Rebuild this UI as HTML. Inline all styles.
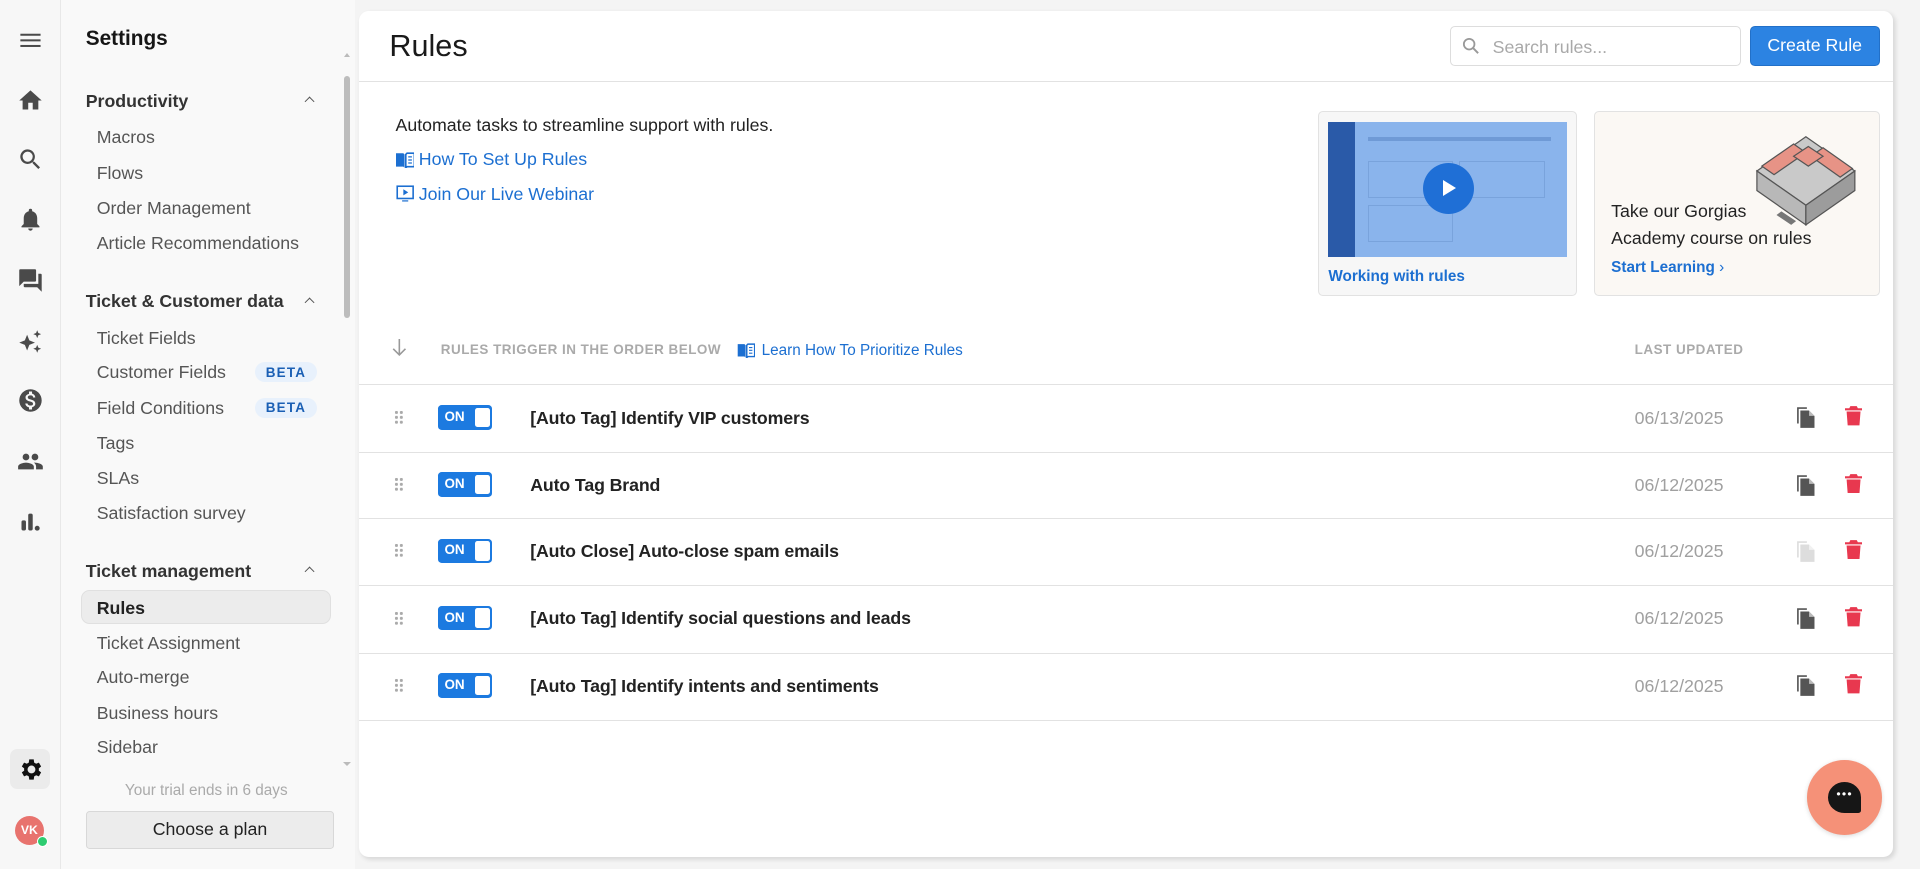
<!DOCTYPE html>
<html><head><meta charset="utf-8"><style>
html{zoom:1.22449}
*{box-sizing:border-box;margin:0;padding:0}
body{width:1568px;height:710px;overflow:hidden;background:#f4f4f4;font-family:"Liberation Sans",sans-serif;color:#161616;position:relative}
.rail{position:absolute;left:0;top:0;width:50px;height:710px;background:#f7f7f7;border-right:1px solid #e8e8e8}
.rail svg{position:absolute;left:14px;width:22px;height:22px;fill:#4a4a4a}
.side{position:absolute;left:50px;top:0;width:240px;height:710px;background:#f9f9f9}
.side h1{position:absolute;left:20px;top:22px;font-size:17px;font-weight:bold}
.sec{position:absolute;left:20px;font-size:14.5px;font-weight:bold;color:#333;width:190px}
.sec:after{content:"";position:absolute;right:4px;top:6px;width:5px;height:5px;border-left:1.3px solid #555;border-top:1.3px solid #555;transform:rotate(45deg)}
.it{position:absolute;left:29px;font-size:14.5px;color:#555}
.beta{position:absolute;left:158px;font-size:11px;font-weight:bold;color:#1a5fb4;background:#e8f1fc;border-radius:9px;padding:2px 9px;letter-spacing:1px}
.main{position:absolute;left:293px;top:9px;width:1253px;height:691px;background:#fff;border-radius:8px;box-shadow:2px 2px 4px rgba(0,0,0,.12)}
.a{position:absolute}
.row{position:absolute;left:0;width:1253px;height:55px;border-top:1px solid #e2e2e2}
.row .drag{position:absolute;left:29px;top:20px;width:8px;height:12px;background:radial-gradient(circle,#aaa 1.2px,transparent 1.4px) 0 0/4px 4px}
.tog{position:absolute;left:65px;top:16px;width:44px;height:20px;background:#1c7ae0;border-radius:3px;color:#fff;font-size:11px;font-weight:bold;padding:3px 0 0 5px}
.tog:after{content:"";position:absolute;right:2px;top:2px;width:12px;height:16px;background:#fff;border-radius:2px}
.row .t{position:absolute;left:140px;top:18px;font-size:14.5px;font-weight:600;color:#222;letter-spacing:-.1px}
.row .d{position:absolute;left:1042px;top:18px;font-size:14.5px;color:#a0a0a0}
.row .cp{position:absolute;left:1174px;top:17px;width:16px;height:18px}
.row .tr{position:absolute;left:1214px;top:17px;width:14px;height:16px}
</style></head><body>
<div class="rail">
<svg style="top:22px" viewBox="0 0 24 24"><rect x="3" y="6" width="18" height="1.8"/><rect x="3" y="11" width="18" height="1.8"/><rect x="3" y="16" width="18" height="1.8"/></svg>
<svg style="top:71px" viewBox="0 0 24 24"><path d="M10 20v-6h4v6h5v-8h3L12 3 2 12h3v8z"/></svg>
<svg style="top:119px" viewBox="0 0 24 24"><path d="M15.5 14h-.8l-.3-.3A6.5 6.5 0 1 0 9.5 16a6.5 6.5 0 0 0 4.2-1.6l.3.3v.8l5 5 1.5-1.5-5-5zm-6 0a4.5 4.5 0 1 1 0-9 4.5 4.5 0 0 1 0 9z"/></svg>
<svg style="top:168px" viewBox="0 0 24 24"><path d="M12 22a2 2 0 0 0 2-2h-4a2 2 0 0 0 2 2zm6-6v-5c0-3.1-1.6-5.6-4.5-6.3V4a1.5 1.5 0 0 0-3 0v.7C7.6 5.4 6 7.9 6 11v5l-2 2v1h16v-1z"/></svg>
<svg style="top:218px" viewBox="0 0 24 24"><path d="M21 6h-2v9H6v2c0 .6.4 1 1 1h11l4 4V7c0-.6-.4-1-1-1zm-4 6V3c0-.6-.4-1-1-1H3c-.6 0-1 .4-1 1v14l4-4h10c.6 0 1-.4 1-1z"/></svg>
<svg style="top:268px" viewBox="0 0 24 24"><path d="M9 6l2 5 5 2-5 2-2 5-2-5-5-2 5-2zM18 2l1 2.5L21.5 5.5 19 6.5 18 9l-1-2.5L14.5 5.5 17 4.5zM18 15l1 2.5 2.5 1-2.5 1L18 22l-1-2.5-2.5-1 2.5-1z"/></svg>
<svg style="top:316px" viewBox="0 0 24 24"><path d="M12 2a10 10 0 1 0 0 20 10 10 0 0 0 0-20zm1.4 16.1V20h-2.7v-1.9c-1.7-.4-3.2-1.5-3.3-3.4h2c.1 1 .8 1.8 2.6 1.8 1.9 0 2.3-.9 2.3-1.5 0-.8-.4-1.6-2.600-2.1-2.4-.6-4.1-1.6-4.1-3.6 0-1.7 1.4-2.8 3.1-3.2V4h2.7v1.9c1.9.5 2.8 1.9 2.9 3.4h-2c0-1.1-.6-1.8-2.3-1.8-1.5 0-2.4.7-2.4 1.7 0 .9.7 1.4 2.6 1.9s4.1 1.300 4.1 3.7c0 1.8-1.3 2.7-2.9 3.3z"/></svg>
<svg style="top:366px" viewBox="0 0 24 24"><path d="M16 11a3 3 0 1 0 0-6 3 3 0 0 0 0 6zm-8 0a3 3 0 1 0 0-6 3 3 0 0 0 0 6zm0 2c-2.3 0-7 1.2-7 3.5V19h14v-2.5C15 14.2 10.3 13 8 13zm8 0h-1c1.2.8 2 2 2 3.5V19h6v-2.5c0-2.3-4.7-3.5-7-3.5z"/></svg>
<svg style="top:415px" viewBox="0 0 24 24"><rect x="4" y="11" width="4" height="9" rx="1.5"/><rect x="10" y="5" width="4" height="15" rx="1.5"/><circle cx="18" cy="18" r="2.2"/></svg>
<div style="position:absolute;left:8px;top:612px;width:33px;height:32px;background:#ebebeb;border-radius:6px"></div>
<svg style="top:617px;fill:#111" viewBox="0 0 24 24"><path d="M19.4 13a7.5 7.5 0 0 0 0-2l2.1-1.6-2-3.5-2.5 1a7.3 7.3 0 0 0-1.7-1L14.9 3h-4l-.4 2.9a7.3 7.3 0 0 0-1.7 1l-2.5-1-2 3.5L6.4 11a7.5 7.5 0 0 0 0 2l-2.1 1.6 2 3.5 2.5-1c.5.4 1.1.7 1.7 1l.4 2.9h4l.4-2.9c.6-.3 1.2-.6 1.7-1l2.5 1 2-3.5zM12.9 15.5a3.5 3.5 0 1 1 0-7 3.5 3.5 0 0 1 0 7z"/></svg>
<div style="position:absolute;left:12px;top:666px;width:24px;height:24px;border-radius:50%;background:#e8736e;color:#fff;font-size:10px;font-weight:bold;text-align:center;line-height:24px">VK</div>
<div style="position:absolute;left:30px;top:683px;width:9px;height:9px;border-radius:50%;background:#2ecc71;border:1.5px solid #fff"></div>
</div>
<div class="side">
<h1>Settings</h1>
<div style="position:absolute;left:231px;top:62px;width:5px;height:198px;background:#bdbdbd;border-radius:3px"></div>
<div style="position:absolute;left:231px;top:41px;width:0;height:0;border:3px solid transparent;border-bottom:4px solid #bbb"></div>
<div style="position:absolute;left:230px;top:622px;width:0;height:0;border:3.5px solid transparent;border-top:4px solid #bbb"></div>
<div class="sec" style="top:74px">Productivity</div>
<div class="it" style="top:104px">Macros</div>
<div class="it" style="top:133px">Flows</div>
<div class="it" style="top:162px">Order Management</div>
<div class="it" style="top:190px">Article Recommendations</div>
<div class="sec" style="top:238px">Ticket &amp; Customer data</div>
<div class="it" style="top:268px">Ticket Fields</div>
<div class="it" style="top:296px">Customer Fields</div><div class="beta" style="top:296px">BETA</div>
<div class="it" style="top:325px">Field Conditions</div><div class="beta" style="top:325px">BETA</div>
<div class="it" style="top:354px">Tags</div>
<div class="it" style="top:382px">SLAs</div>
<div class="it" style="top:411px">Satisfaction survey</div>
<div class="sec" style="top:458px">Ticket management</div>
<div style="position:absolute;left:16px;top:482px;width:204px;height:28px;background:#ececec;border:1px solid #e0e0e0;border-radius:7px"></div>
<div class="it" style="top:488px;font-weight:bold;color:#222">Rules</div>
<div class="it" style="top:517px">Ticket Assignment</div>
<div class="it" style="top:545px">Auto-merge</div>
<div class="it" style="top:574px">Business hours</div>
<div class="it" style="top:602px">Sidebar</div>
<div style="position:absolute;left:52px;top:639px;font-size:12.5px;color:#aaa">Your trial ends in 6 days</div>
<div style="position:absolute;left:20px;top:662px;width:203px;height:31px;background:#ececec;border:1px solid #d8d8d8;border-radius:3px;text-align:center;line-height:29px;font-size:14.5px;color:#222">Choose a plan</div>
</div>
<div class="main">
<div class="a" style="left:25px;top:15px;font-size:25px;color:#1a1a1a">Rules</div>
<div class="a" style="left:891px;top:12px;width:238px;height:33px;border:1px solid #ddd;border-radius:4px"></div>
<svg class="a" style="left:900px;top:20px" width="16" height="16" viewBox="0 0 24 24"><circle cx="10" cy="10" r="6.5" fill="none" stroke="#999" stroke-width="2.2"/><path d="M15 15l6 6" stroke="#999" stroke-width="2.4"/></svg>
<div class="a" style="left:926px;top:21px;font-size:14.5px;color:#a9a9a9">Search rules...</div>
<div class="a" style="left:1136px;top:12px;width:106px;height:33px;background:#2c83e2;border-radius:4px;color:#fff;font-size:14.5px;text-align:center;line-height:31px;border:1px solid #2270c8">Create Rule</div>
<div class="a" style="left:0;top:57px;width:1253px;border-top:1px solid #e2e2e2"></div>
<div class="a" style="left:30px;top:85px;font-size:14.5px;color:#222">Automate tasks to streamline support with rules.</div>
<svg class="a" style="left:30px;top:115px" width="15" height="13" viewBox="0 0 15 13"><path d="M0 1h6l1 1v11l-1-1H0z" fill="#1c6fd1"/><path d="M8 2l1-1h6v11H9l-1 1z" fill="none" stroke="#1c6fd1" stroke-width="1.3"/><path d="M10 4h3M10 6.5h3M10 9h3" stroke="#1c6fd1"/></svg>
<div class="a" style="left:49px;top:113px;font-size:14.5px;color:#1c6fd1">How To Set Up Rules</div>
<svg class="a" style="left:30px;top:142px" width="15" height="14" viewBox="0 0 15 14"><rect x="1" y="1" width="13" height="10" fill="none" stroke="#1c6fd1" stroke-width="1.3"/><path d="M6 3.5v5l4-2.5z" fill="#1c6fd1"/><path d="M5 13h5" stroke="#1c6fd1"/></svg>
<div class="a" style="left:49px;top:141px;font-size:14.5px;color:#1c6fd1">Join Our Live Webinar</div>
<div class="a" style="left:783px;top:82px;width:212px;height:151px;border:1px solid #e2e2e2;border-radius:4px;background:#f7f7f7;overflow:hidden">
<div class="a" style="left:8px;top:8px;width:195px;height:110px;background:#8ab4ec"></div>
<div class="a" style="left:8px;top:8px;width:22px;height:110px;background:#2a5aa8"></div>
<div class="a" style="left:40px;top:20px;width:150px;height:3px;background:#6f9ad6"></div>
<div class="a" style="left:40px;top:40px;width:70px;height:30px;border:1px solid #79a3dc"></div>
<div class="a" style="left:115px;top:40px;width:70px;height:30px;border:1px solid #79a3dc"></div>
<div class="a" style="left:40px;top:76px;width:70px;height:30px;border:1px solid #79a3dc"></div>
<div class="a" style="left:85px;top:41px;width:42px;height:42px;border-radius:50%;background:#1f6fd6"></div>
<div class="a" style="left:102px;top:55px;width:0;height:0;border-top:7px solid transparent;border-bottom:7px solid transparent;border-left:11px solid #fff"></div>
<div class="a" style="left:8px;top:127px;font-size:12.5px;font-weight:bold;color:#1c6fd1">Working with rules</div>
</div>
<div class="a" style="left:1009px;top:82px;width:233px;height:151px;border:1px solid #e2e2e2;border-radius:4px;background:#fbf8f4;overflow:hidden">
<svg class="a" style="left:128px;top:8px" width="96" height="92" viewBox="0 0 96 92"><path d="M4 40l40-28 40 28-40 28z" fill="#c9c9c9" stroke="#555"/><path d="M4 40v16l40 28V68z" fill="#b8b8b8" stroke="#555"/><path d="M44 68v16l40-28V40z" fill="#9c9c9c" stroke="#555"/><path d="M8 36l26-18 10 7-26 18z M48 28l10-7 24 17-10 7z" fill="#e79386" stroke="#555"/><path d="M34 28l12-8 12 8-12 8z" fill="#e79386" stroke="#555"/><path d="M20 76l12 8 4-3-12-8z" fill="#777"/></svg>
<div class="a" style="left:13px;top:70px;font-size:14.5px;color:#222;line-height:22px">Take our Gorgias<br>Academy course on rules</div>
<div class="a" style="left:13px;top:120px;font-size:12.5px;font-weight:bold;color:#1c6fd1">Start Learning <span style="font-weight:normal">›</span></div>
</div>
<svg class="a" style="left:27px;top:268px" width="12" height="14" viewBox="0 0 12 14"><path d="M6 0v13M1 8l5 5 5-5" fill="none" stroke="#999" stroke-width="1.3"/></svg>
<div class="a" style="left:67px;top:270px;font-size:11px;font-weight:bold;color:#aaa;letter-spacing:.4px">RULES TRIGGER IN THE ORDER BELOW</div>
<svg class="a" style="left:309px;top:271px" width="15" height="12" viewBox="0 0 15 13"><path d="M0 1h6l1 1v11l-1-1H0z" fill="#1c6fd1"/><path d="M8 2l1-1h6v11H9l-1 1z" fill="none" stroke="#1c6fd1" stroke-width="1.3"/><path d="M10 4h3M10 6.5h3M10 9h3" stroke="#1c6fd1"/></svg>
<div class="a" style="left:329px;top:270px;font-size:12.5px;color:#1c6fd1">Learn How To Prioritize Rules</div>
<div class="a" style="left:1042px;top:270px;font-size:11px;font-weight:bold;color:#aaa;letter-spacing:.4px">LAST UPDATED</div>

<div class="row" style="top:305px"><div class="drag"></div><div class="tog">ON</div><div class="t">[Auto Tag] Identify VIP customers</div><div class="d">06/13/2025</div>
<svg class="cp" viewBox="0 0 18 20"><path d="M1 1h9v1.5H2.5V16H1z" fill="#555"/><path d="M4 4h8l5 5v11H4z" fill="#555"/><path d="M12 4v5h5z" fill="#fff" opacity=".6"/></svg>
<svg class="tr" viewBox="0 0 16 18"><path d="M5 0h6l1 2h4v2H0V2h4zM1.5 5h13l-1 13h-11z" fill="#e8384f"/></svg></div>
<div class="row" style="top:360px"><div class="drag"></div><div class="tog">ON</div><div class="t">Auto Tag Brand</div><div class="d">06/12/2025</div>
<svg class="cp" viewBox="0 0 18 20"><path d="M1 1h9v1.5H2.5V16H1z" fill="#555"/><path d="M4 4h8l5 5v11H4z" fill="#555"/><path d="M12 4v5h5z" fill="#fff" opacity=".6"/></svg>
<svg class="tr" viewBox="0 0 16 18"><path d="M5 0h6l1 2h4v2H0V2h4zM1.5 5h13l-1 13h-11z" fill="#e8384f"/></svg></div>
<div class="row" style="top:414px"><div class="drag"></div><div class="tog">ON</div><div class="t">[Auto Close] Auto-close spam emails</div><div class="d">06/12/2025</div>
<svg class="cp" viewBox="0 0 18 20"><path d="M1 1h9v1.5H2.5V16H1z" fill="#ddd"/><path d="M4 4h8l5 5v11H4z" fill="#ddd"/><path d="M12 4v5h5z" fill="#fff" opacity=".6"/></svg>
<svg class="tr" viewBox="0 0 16 18"><path d="M5 0h6l1 2h4v2H0V2h4zM1.5 5h13l-1 13h-11z" fill="#e8384f"/></svg></div>
<div class="row" style="top:469px"><div class="drag"></div><div class="tog">ON</div><div class="t">[Auto Tag] Identify social questions and leads</div><div class="d">06/12/2025</div>
<svg class="cp" viewBox="0 0 18 20"><path d="M1 1h9v1.5H2.5V16H1z" fill="#555"/><path d="M4 4h8l5 5v11H4z" fill="#555"/><path d="M12 4v5h5z" fill="#fff" opacity=".6"/></svg>
<svg class="tr" viewBox="0 0 16 18"><path d="M5 0h6l1 2h4v2H0V2h4zM1.5 5h13l-1 13h-11z" fill="#e8384f"/></svg></div>
<div class="row" style="top:524px;height:56px;border-bottom:1px solid #e2e2e2"><div class="drag"></div><div class="tog">ON</div><div class="t">[Auto Tag] Identify intents and sentiments</div><div class="d">06/12/2025</div>
<svg class="cp" viewBox="0 0 18 20"><path d="M1 1h9v1.5H2.5V16H1z" fill="#555"/><path d="M4 4h8l5 5v11H4z" fill="#555"/><path d="M12 4v5h5z" fill="#fff" opacity=".6"/></svg>
<svg class="tr" viewBox="0 0 16 18"><path d="M5 0h6l1 2h4v2H0V2h4zM1.5 5h13l-1 13h-11z" fill="#e8384f"/></svg></div>

<div class="a" style="left:1183px;top:612px;width:61px;height:61px;border-radius:50%;background:#f59178;box-shadow:0 1px 4px rgba(0,0,0,.15)"></div>
<div class="a" style="left:1200px;top:630px;width:27px;height:25px;border-radius:50% 50% 8% 50%;background:#161616;color:#fff;font-size:10px;text-align:center;line-height:20px;letter-spacing:1px">•••</div>
</div>
</body></html>
